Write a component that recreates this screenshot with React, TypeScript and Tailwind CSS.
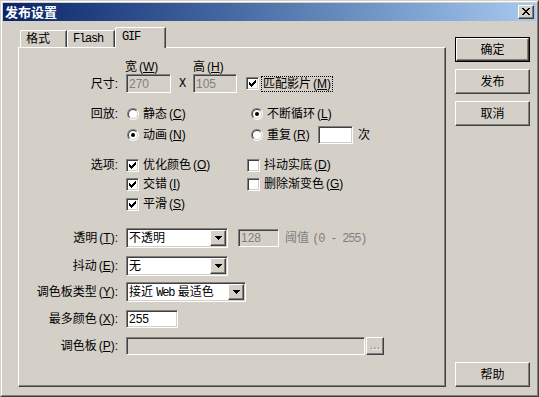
import React from "react";

const CHECK = ["......x", ".....xx", "x...xxx", "xx.xxx.", "xxxxx..", ".xxx...", "..x...."];
const CROSS = ["xx....xx", ".xx..xx.", "..xxxx..", "...xx...", "..xxxx..", ".xx..xx.", "xx....xx"];
const ARROW = ["xxxxxxx", ".xxxxx.", "..xxx..", "...x..."];

function Pix({ rows, color = "#000" }: { rows: string[]; color?: string }) {
  const w = rows[0].length;
  const h = rows.length;
  return (
    <svg width={w} height={h} viewBox={`0 0 ${w} ${h}`} shapeRendering="crispEdges">
      {rows.flatMap((r, y) =>
        r.split("").map((c, x) =>
          c === "x" ? <rect key={`${x}-${y}`} x={x} y={y} width={1} height={1} fill={color} /> : null
        )
      )}
    </svg>
  );
}

// label with underlined shortcut key
function K({ t, k }: { t: string; k: string }) {
  return (
    <>
      {t}
      <span className="ml-[2px]">
        (<span className="underline underline-offset-[1px]">{k}</span>)
      </span>
    </>
  );
}

const sunken =
  "border border-t-[#808080] border-l-[#808080] border-b-white border-r-white shadow-[inset_1px_1px_0_#404040,inset_-1px_-1px_0_#d4d0c8]";
const raised =
  "border border-t-white border-l-white border-b-[#404040] border-r-[#404040] shadow-[inset_-1px_-1px_0_#808080]";
const mono = "[font-family:'Liberation_Mono',monospace] tracking-[-1.2px]";

function Check({ on }: { on?: boolean }) {
  return (
    <div className={`flex h-[13px] w-[13px] shrink-0 items-center justify-center bg-white ${sunken}`}>
      {on && <Pix rows={CHECK} />}
    </div>
  );
}

function Radio({ on }: { on?: boolean }) {
  return (
    <div className="h-[12px] w-[12px] shrink-0 rounded-full border border-t-[#808080] border-l-[#808080] border-b-white border-r-white">
      <div className="flex h-full w-full items-center justify-center rounded-full border border-t-[#404040] border-l-[#404040] border-b-[#d4d0c8] border-r-[#d4d0c8] bg-white">
        {on && <div className="h-[4px] w-[4px] rounded-full bg-black" />}
      </div>
    </div>
  );
}

function Edit({ className = "", value = "", disabled }: { className?: string; value?: string; disabled?: boolean }) {
  return (
    <div
      className={`flex shrink-0 items-center pl-[2px] ${sunken} ${
        disabled ? "bg-[#d4d0c8] text-[#808080]" : "bg-white text-black"
      } ${className}`}
    >
      {value}
    </div>
  );
}

function Combo({ className = "", children }: { className?: string; children: React.ReactNode }) {
  return (
    <div className={`flex h-[20px] shrink-0 items-center bg-white p-px ${sunken} ${className}`}>
      <span className="flex-1 pl-px">{children}</span>
      <div className={`flex h-[16px] w-[16px] items-center justify-center bg-[#d4d0c8] ${raised}`}>
        <Pix rows={ARROW} />
      </div>
    </div>
  );
}

function Btn({ children, def }: { children: React.ReactNode; def?: boolean }) {
  return (
    <div className={`h-[25px] w-[75px] ${def ? "border border-black" : ""}`}>
      <div className={`flex h-full w-full items-center justify-center ${raised}`}>{children}</div>
    </div>
  );
}

function Label({ children }: { children?: React.ReactNode }) {
  return <div className="w-[101px] shrink-0 pr-[2px] text-right">{children}</div>;
}

export default function App() {
  return (
    <div className="h-[397px] w-[539px] overflow-hidden [font-family:'Liberation_Sans','Noto_Sans_CJK_SC',sans-serif] text-[12px] leading-none text-black">
      <div className="h-full border border-t-[#d4d0c8] border-l-[#d4d0c8] border-b-[#404040] border-r-[#404040]">
        <div className="flex h-full flex-col border border-t-white border-l-white border-b-[#808080] border-r-[#808080] bg-[#d4d0c8] p-px">
          {/* title bar */}
          <div className="flex h-[18px] shrink-0 items-center justify-between bg-linear-to-r from-[#0a246a] to-[#a6caf0] pl-[2px] pr-[2px]">
            <span className="text-[13px] font-bold text-white">发布设置</span>
            <div className={`flex h-[14px] w-[16px] items-center justify-center bg-[#d4d0c8] pr-px pb-px ${raised}`}>
              <Pix rows={CROSS} />
            </div>
          </div>

          <div className="flex flex-1">
            {/* tabs + panel */}
            <div className="ml-[15px] flex flex-col pt-[6px] pb-[7px]">
              <div className="flex h-[20px] items-end pl-[2px]">
                <div className="flex h-[17px] w-[47px] items-center rounded-tl-[2px] border-t border-l border-r border-t-white border-l-white border-r-[#404040] pl-[5px] shadow-[inset_-1px_0_0_#808080]">
                  格式
                </div>
                <div className={`flex h-[17px] w-[48px] items-center rounded-tl-[2px] border-t border-l border-r border-t-white border-l-white border-r-[#404040] pl-[5px] shadow-[inset_-1px_0_0_#808080] ${mono}`}>
                  Flash
                </div>
                <div className={`relative z-10 -mb-px flex h-[21px] w-[51px] items-center rounded-tl-[2px] border-t border-l border-r border-t-white border-l-white border-r-[#404040] bg-[#d4d0c8] pb-[3px] pl-[6px] shadow-[inset_-1px_0_0_#808080] ${mono}`}>
                  GIF
                </div>
              </div>

              <div className="flex h-[340px] w-[428px] flex-col border border-t-white border-l-white border-b-[#404040] border-r-[#404040] shadow-[inset_-1px_-1px_0_#808080]">
                {/* width / height header */}
                <div className="mt-[12px] flex h-[14px] items-center">
                  <Label />
                  <span className="ml-[5px] w-[68px]">
                    <K t="宽" k="W" />
                  </span>
                  <span>
                    <K t="高" k="H" />
                  </span>
                </div>

                {/* size */}
                <div className="flex h-[19px] items-center">
                  <Label>尺寸:</Label>
                  <Edit className="ml-[6px] h-[19px] w-[45px]" value="270" disabled />
                  <span className={`w-[22px] text-center ${mono}`}>X</span>
                  <Edit className="h-[19px] w-[44px]" value="105" disabled />
                  <div className="ml-[9px]">
                    <Check on />
                  </div>
                  <span className="ml-[2px] border border-dotted border-black px-px py-px">
                    <K t="匹配影片" k="M" />
                  </span>
                </div>

                {/* playback */}
                <div className="mt-[12px] flex h-[18px] items-center">
                  <Label>回放:</Label>
                  <div className="flex w-[131px] items-center pl-[7px]">
                    <Radio />
                    <span className="ml-[4px]">
                      <K t="静态" k="C" />
                    </span>
                  </div>
                  <Radio on />
                  <span className="ml-[4px]">
                    <K t="不断循环" k="L" />
                  </span>
                </div>
                <div className="mt-[3px] flex h-[18px] items-center">
                  <Label />
                  <div className="flex w-[131px] items-center pl-[7px]">
                    <Radio on />
                    <span className="ml-[4px]">
                      <K t="动画" k="N" />
                    </span>
                  </div>
                  <Radio />
                  <span className="ml-[4px] w-[51px]">
                    <K t="重复" k="R" />
                  </span>
                  <Edit className="h-[18px] w-[35px]" />
                  <span className="ml-[5px]">次</span>
                </div>

                {/* options */}
                <div className="mt-[12px] flex h-[18px] items-center">
                  <Label>选项:</Label>
                  <div className="ml-[6px] flex w-[121px] items-center">
                    <Check on />
                    <span className="ml-[4px]">
                      <K t="优化颜色" k="O" />
                    </span>
                  </div>
                  <Check />
                  <span className="ml-[4px]">
                    <K t="抖动实底" k="D" />
                  </span>
                </div>
                <div className="mt-px flex h-[18px] items-center">
                  <Label />
                  <div className="ml-[6px] flex w-[121px] items-center">
                    <Check on />
                    <span className="ml-[4px]">
                      <K t="交错" k="I" />
                    </span>
                  </div>
                  <Check />
                  <span className="ml-[4px]">
                    <K t="删除渐变色" k="G" />
                  </span>
                </div>
                <div className="mt-[2px] flex h-[18px] items-center">
                  <Label />
                  <div className="ml-[6px] flex w-[121px] items-center">
                    <Check on />
                    <span className="ml-[4px]">
                      <K t="平滑" k="S" />
                    </span>
                  </div>
                </div>

                {/* transparency */}
                <div className="mt-[15px] flex h-[20px] items-center">
                  <Label>
                    <K t="透明" k="T" />:
                  </Label>
                  <Combo className="ml-[6px] w-[102px]">不透明</Combo>
                  <Edit className="ml-[10px] h-[18px] w-[41px]" value="128" disabled />
                  <span className="ml-[6px] text-[#808080]">
                    阈值 <span className={mono}>(0 - 255)</span>
                  </span>
                </div>

                {/* dither */}
                <div className="mt-[8px] flex h-[20px] items-center">
                  <Label>
                    <K t="抖动" k="E" />:
                  </Label>
                  <Combo className="ml-[6px] w-[102px]">无</Combo>
                </div>

                {/* palette type */}
                <div className="mt-[6px] flex h-[20px] items-center">
                  <Label>
                    <K t="调色板类型" k="Y" />:
                  </Label>
                  <Combo className="ml-[6px] w-[120px]">
                    接近 <span className={mono}>Web</span> 最适色
                  </Combo>
                </div>

                {/* max colours */}
                <div className="mt-[8px] flex h-[18px] items-center">
                  <Label>
                    <K t="最多颜色" k="X" />:
                  </Label>
                  <Edit className="ml-[6px] h-[18px] w-[52px]" value="255" />
                </div>

                {/* palette */}
                <div className="mt-[9px] flex h-[18px] items-center">
                  <Label>
                    <K t="调色板" k="P" />:
                  </Label>
                  <Edit className="ml-[6px] h-[18px] w-[239px]" disabled />
                  <div className={`ml-px flex h-[18px] w-[18px] items-end justify-center bg-[#d4d0c8] pb-[3px] text-[#808080] [text-shadow:1px_1px_0_#fff] ${raised}`}>
                    ...
                  </div>
                </div>
              </div>
            </div>

            {/* buttons */}
            <div className="ml-[9px] flex w-[75px] flex-col gap-[7px] pt-[16px] pb-[7px]">
              <Btn def>确定</Btn>
              <Btn>发布</Btn>
              <Btn>取消</Btn>
              <div className="mt-auto">
                <Btn>帮助</Btn>
              </div>
            </div>
          </div>
        </div>
      </div>
    </div>
  );
}
